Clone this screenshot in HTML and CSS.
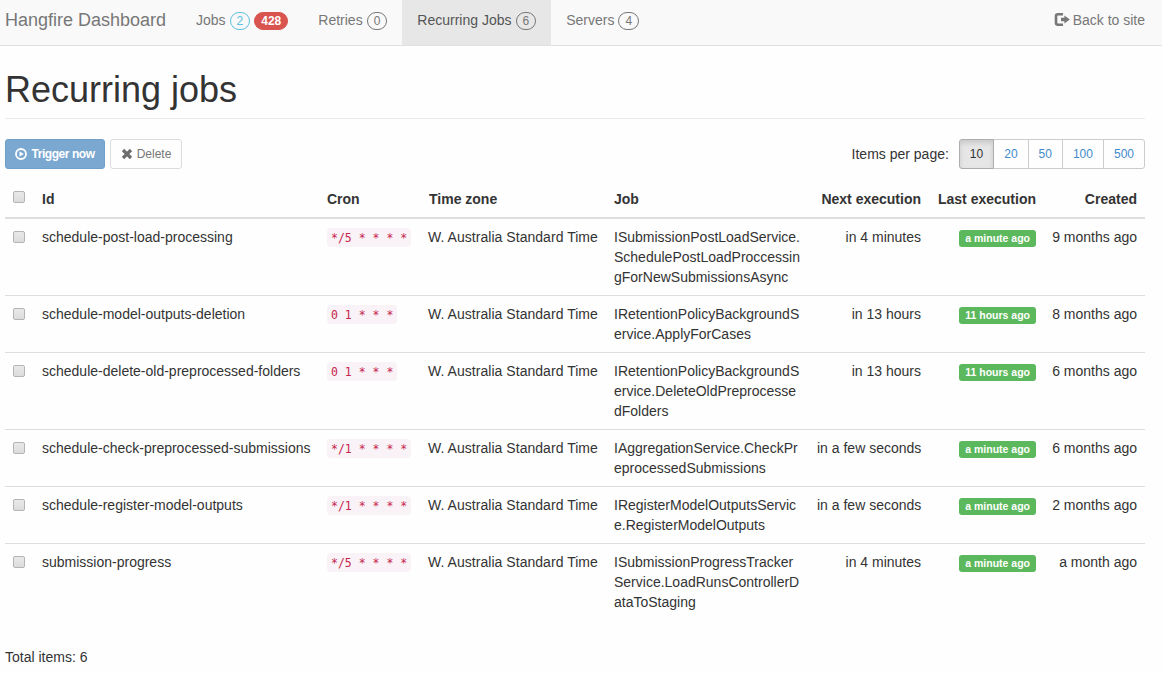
FILE: index.html
```
<!DOCTYPE html>
<html lang="en">
<head>
<meta charset="utf-8">
<title>Recurring jobs - Hangfire Dashboard</title>
<link rel="stylesheet" href="styles.css">
</head>
<body>
<nav class="navbar">
  <a class="brand">Hangfire Dashboard</a>
  <a class="nav-item jobs">Jobs <span class="metric info">2</span><span class="metric danger">428</span></a>
  <a class="nav-item">Retries <span class="metric">0</span></a>
  <a class="nav-item active">Recurring Jobs <span class="metric">6</span></a>
  <a class="nav-item">Servers <span class="metric">4</span></a>
  <a class="back">
    <svg width="16" height="14" viewBox="0 0 16 14"><path d="M9 1.3H4Q2 1.3 2 3.3V9.7Q2 11.7 4 11.7H9" fill="none" stroke="#777" stroke-width="2.6"/><path d="M7 4.8H10.4V2.4L15.8 6.5L10.4 10.6V8.2H7Z" fill="#777"/></svg>Back to site</a>
</nav>
<main class="content">
  <h1 class="page-header">Recurring jobs</h1>
  <div class="toolbar">
    <button class="btn primary"><svg width="12" height="12" viewBox="0 0 12 12"><circle cx="6" cy="6" r="5" fill="none" stroke="#fff" stroke-width="1.8"/><path d="M4.5 3.4L8.8 6L4.5 8.6Z" fill="#fff"/></svg>Trigger now</button>
    <button class="btn"><svg width="12" height="12" viewBox="0 0 12 12"><path d="M2 2L10 10M10 2L2 10" stroke="#6e6e6e" stroke-width="3.2"/></svg>Delete</button>
    <span class="per-page">Items per page:</span>
    <div class="pages"><a class="current">10</a><a>20</a><a>50</a><a>100</a><a>500</a></div>
  </div>
  <table class="table">
    <colgroup><col class="c-check"><col class="c-id"><col class="c-cron"><col class="c-zone"><col class="c-job"><col class="c-next"><col class="c-last"><col></colgroup>
    <thead><tr><th><input type="checkbox"></th><th>Id</th><th>Cron</th><th class="zone-head">Time zone</th><th>Job</th><th class="right">Next execution</th><th class="right">Last execution</th><th class="right">Created</th></tr></thead>
    <tbody>
      <tr><td><input type="checkbox"></td><td>schedule-post-load-processing</td><td><code>*/5 * * * *</code></td><td class="zone">W. Australia Standard Time</td><td>ISubmissionPostLoadService.<br>SchedulePostLoadProccessin<br>gForNewSubmissionsAsync</td><td class="right">in 4 minutes</td><td class="right"><span class="label">a minute ago</span></td><td class="right">9 months ago</td></tr>
      <tr><td><input type="checkbox"></td><td>schedule-model-outputs-deletion</td><td><code>0 1 * * *</code></td><td class="zone">W. Australia Standard Time</td><td>IRetentionPolicyBackgroundS<br>ervice.ApplyForCases</td><td class="right">in 13 hours</td><td class="right"><span class="label">11 hours ago</span></td><td class="right">8 months ago</td></tr>
      <tr><td><input type="checkbox"></td><td>schedule-delete-old-preprocessed-folders</td><td><code>0 1 * * *</code></td><td class="zone">W. Australia Standard Time</td><td>IRetentionPolicyBackgroundS<br>ervice.DeleteOldPreprocesse<br>dFolders</td><td class="right">in 13 hours</td><td class="right"><span class="label">11 hours ago</span></td><td class="right">6 months ago</td></tr>
      <tr><td><input type="checkbox"></td><td>schedule-check-preprocessed-submissions</td><td><code>*/1 * * * *</code></td><td class="zone">W. Australia Standard Time</td><td>IAggregationService.CheckPr<br>eprocessedSubmissions</td><td class="right">in a few seconds</td><td class="right"><span class="label">a minute ago</span></td><td class="right">6 months ago</td></tr>
      <tr><td><input type="checkbox"></td><td>schedule-register-model-outputs</td><td><code>*/1 * * * *</code></td><td class="zone">W. Australia Standard Time</td><td>IRegisterModelOutputsServic<br>e.RegisterModelOutputs</td><td class="right">in a few seconds</td><td class="right"><span class="label">a minute ago</span></td><td class="right">2 months ago</td></tr>
      <tr><td><input type="checkbox"></td><td>submission-progress</td><td><code>*/5 * * * *</code></td><td class="zone">W. Australia Standard Time</td><td>ISubmissionProgressTracker<br>Service.LoadRunsControllerD<br>ataToStaging</td><td class="right">in 4 minutes</td><td class="right"><span class="label">a minute ago</span></td><td class="right">a month ago</td></tr>
    </tbody>
  </table>
  <div class="total">Total items: 6</div>
</main>
</body>
</html>
```
FILE: styles.css
```
* { box-sizing: border-box; }
body {
  margin: 0;
  background: #fefefe;
  color: #333;
  font: 14px/20px Arial, "Liberation Sans", sans-serif;
  overflow: hidden;
}
.navbar {
  display: flex;
  height: 46px;
  padding: 0 17px 0 5px;
  background: #f9f9f9;
  border-bottom: 1px solid #e0e0e2;
  color: #777;
}
.brand { width: 176px; padding-top: 10px; font-size: 18px; white-space: nowrap; }
.nav-item {
  display: flex;
  height: 45px;
  padding: 10px 15px;
  gap: 4px;
  white-space: nowrap;
}
.active { background: #e7e7e7; color: #555; }
.metric {
  height: 18px;
  margin-top: 2px;
  padding: 0 6px;
  border: 1px solid #777;
  border-radius: 10px;
  font-size: 12px;
  line-height: 17px;
  color: #777;
}
.info { border-color: #5bc0de; color: #5bc0de; }
.danger { padding: 0 6px; border-color: #d9534f; background: #d9534f; color: #fff; font-weight: bold; }
.back { display: flex; margin-left: auto; padding-top: 10px; gap: 2px; }
.back svg { margin-top: 3px; margin-right: 1px; }
.content { padding: 0 17px 0 5px; }
.page-header {
  height: 73px;
  margin: 0 0 20px;
  padding-top: 24px;
  border-bottom: 1px solid #eaeaea;
  font-size: 36px;
  font-weight: 500;
  line-height: 40px;
}
.toolbar { display: flex; height: 30px; margin-bottom: 12px; gap: 5px; }
.btn {
  display: flex;
  align-items: center;
  justify-content: center;
  gap: 4px;
  width: 72px;
  height: 30px;
  padding: 0;
  border: 1px solid #dcdcdc;
  border-radius: 3px;
  background: #fefefe;
  color: #777;
  font: 12px/18px Arial, "Liberation Sans", sans-serif;
  white-space: nowrap;
}
.primary { width: 100px; border-color: #709fc8; background: #7aa8d0; color: #fff; font-weight: bold; letter-spacing: -0.45px; }
.per-page { margin-left: auto; margin-right: 5px; padding-top: 5px; }
.pages { display: flex; }
.pages a {
  height: 30px;
  margin-left: -1px;
  padding: 5px 10px;
  border: 1px solid #ccc;
  color: #428bca;
  font-size: 12px;
  line-height: 18px;
}
.pages a:first-child { margin-left: 0; border-radius: 3px 0 0 3px; }
.pages a:last-child { border-radius: 0 3px 3px 0; }
.pages .current {
  border-color: #adadad;
  background: #e6e6e6;
  box-shadow: inset 0 3px 5px rgba(0, 0, 0, .125);
  color: #333;
  z-index: 1;
}
.table { width: 1140px; border-spacing: 0; table-layout: fixed; }
.c-check { width: 29px; }
.c-id { width: 285px; }
.c-cron { width: 101px; }
.c-zone { width: 186px; }
.c-job { width: 203px; }
.c-next { width: 120px; }
.c-last { width: 115px; }
th, td { padding: 8px; line-height: 20px; vertical-align: top; text-align: left; white-space: nowrap; }
th { border-bottom: 2px solid #ddd; }
.table .zone-head { padding-left: 9px; }
.zone { letter-spacing: 0.04px; }
tbody tr + tr td { border-top: 1px solid #ddd; }
.table .right { text-align: right; }
input {
  appearance: none;
  display: block;
  width: 12px;
  height: 12px;
  margin: 4px 0 0;
  border: 1px solid #b4b4b4;
  border-radius: 2px;
  background: linear-gradient(#e9e9e9, #dcdcdc);
}
th input { margin-top: 2px; }
code {
  display: block;
  width: max-content;
  height: 19px;
  margin-top: 1px;
  padding: 1px 4px 0;
  border-radius: 4px;
  background: #f9f2f6;
  color: #c7254e;
  font: 11.5px/18px "DejaVu Sans Mono", monospace;
}
.label {
  display: inline-block;
  height: 17px;
  margin-top: 3px;
  padding: 0 6px;
  border-radius: 3px;
  background: #5cb85c;
  color: #fff;
  font-size: 10.5px;
  font-weight: bold;
  line-height: 17px;
  vertical-align: top;
}
.total { margin-top: 27px; }
```
